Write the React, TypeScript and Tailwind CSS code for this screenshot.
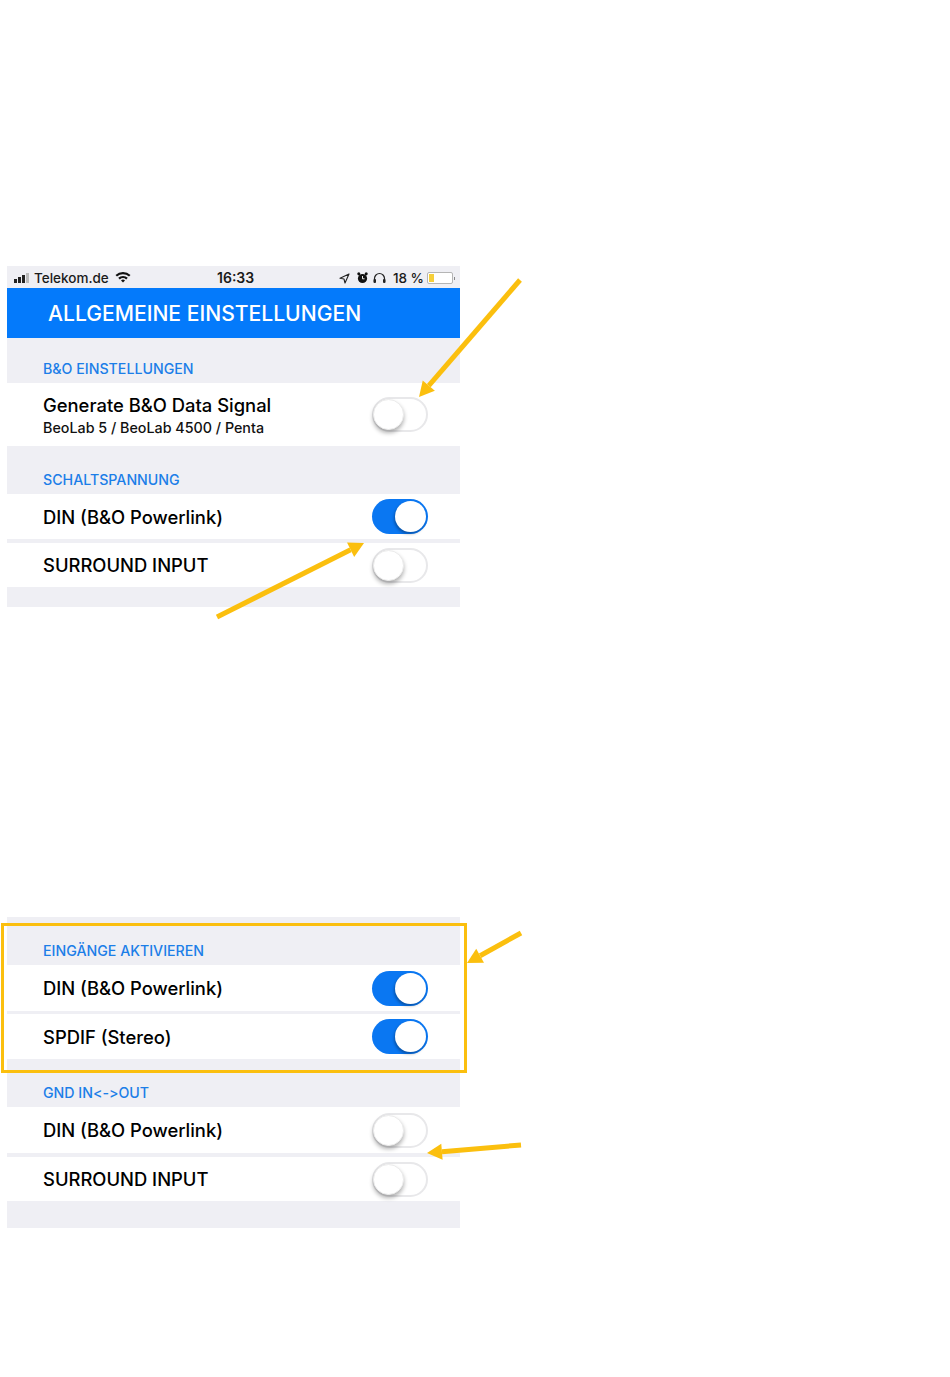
import React from "react";

const Toggle = ({ on }: { on: boolean }) => (
  <div
    className={`relative h-[35px] w-[56px] shrink-0 rounded-full ${
      on ? "bg-[#0a77f2]" : "border-2 border-[#e8e8ea] bg-white"
    }`}
  >
    <div
      className={`absolute h-[31px] w-[31px] rounded-full bg-white ${
        on
          ? "top-[2px] right-[2px] shadow-[-1px_2px_3px_rgba(0,0,0,0.3)]"
          : "top-[0px] left-[-1px] border border-[#ececec] shadow-[0_3px_4px_rgba(0,0,0,0.3)]"
      }`}
    />
  </div>
);

const SectionLabel = ({ children, height }: { children: React.ReactNode; height: string }) => (
  <div className={`flex items-end bg-[#efeff4] pb-[5px] pl-[36px] ${height}`}>
    <span className="text-[14.2px] leading-[18px] font-medium text-[#1c7ee8] [font-variant-ligatures:none] [font-feature-settings:'calt'_0]">
      {children}
    </span>
  </div>
);

const Row = ({ label, on, height }: { label: string; on: boolean; height: string }) => (
  <div className={`flex items-center justify-between bg-white pr-[32px] pl-[36px] ${height}`}>
    <span className="relative top-[1px] text-[18.4px] font-medium text-black">{label}</span>
    <Toggle on={on} />
  </div>
);

const StatusBar = () => (
  <div className="relative flex h-[22px] items-center justify-between bg-[#efeff4] pr-[5px] pl-[7px] pt-[2px] text-[13.5px] font-medium text-[#1a1a1a]">
    <div className="flex items-center">
      <div className="flex items-end gap-[1px]">
        <span className="h-[4px] w-[3px] bg-[#222]" />
        <span className="h-[6px] w-[3px] bg-[#222]" />
        <span className="h-[8px] w-[3px] bg-[#222]" />
        <span className="h-[10px] w-[3px] bg-[#bbb]" />
      </div>
      <span className="ml-[5px]">Telekom.de</span>
      <svg className="ml-[6px] -translate-y-[1px]" width="16" height="12" viewBox="0 0 16 12">
        <path d="M0.5 4 A11 11 0 0 1 15.5 4 L14 5.6 A9 9 0 0 0 2 5.6 Z" fill="#111" />
        <path d="M3.2 6.8 A7 7 0 0 1 12.8 6.8 L11.2 8.4 A5 5 0 0 0 4.8 8.4 Z" fill="#111" />
        <path d="M6 9.4 A3 3 0 0 1 10 9.4 L8 11.6 Z" fill="#111" />
      </svg>
    </div>
    <span className="absolute top-[1px] left-[210px] text-[14px] font-semibold">16:33</span>
    <div className="flex items-center">
      <svg width="11" height="11" viewBox="0 0 11 11">
        <path d="M10 1 L1 5.2 L5 6 L6 10 Z" fill="none" stroke="#222" strokeWidth="1.1" strokeLinejoin="round" />
      </svg>
      <svg className="ml-[7px]" width="11" height="12" viewBox="0 0 11 12">
        <circle cx="5.5" cy="6.5" r="4.6" fill="#111" />
        <circle cx="1.8" cy="1.8" r="1.5" fill="#111" />
        <circle cx="9.2" cy="1.8" r="1.5" fill="#111" />
        <path d="M5.5 4 V6.8 H7.5" stroke="#eee" strokeWidth="1" fill="none" />
      </svg>
      <svg className="ml-[5px]" width="13" height="12" viewBox="0 0 13 12">
        <path d="M1.5 10 V6.5 A5 5 0 0 1 11.5 6.5 V10" stroke="#222" strokeWidth="1.2" fill="none" />
        <rect x="0.5" y="7" width="2.5" height="4" rx="1" fill="#222" />
        <rect x="10" y="7" width="2.5" height="4" rx="1" fill="#222" />
      </svg>
      <span className="ml-[7px]">18 %</span>
      <div className="ml-[3px] flex h-[12px] w-[26px] items-center rounded-[2px] border border-[#b5b5b5] bg-white p-[1px]">
        <span className="h-full w-[5px] bg-[#f6cf3a]" />
      </div>
      <span className="ml-[1px] h-[3px] w-[1px] bg-[#888]" />
    </div>
  </div>
);

const Arrow = ({ x1, y1, x2, y2 }: { x1: number; y1: number; x2: number; y2: number }) => {
  // line stops short of the head so the tip stays sharp
  const len = Math.hypot(x2 - x1, y2 - y1);
  const ux = (x2 - x1) / len;
  const uy = (y2 - y1) / len;
  const bx = x2 - ux * 15;
  const by = y2 - uy * 15;
  const head = `${x2},${y2} ${bx - uy * 8},${by + ux * 8} ${bx + uy * 8},${by - ux * 8}`;
  return (
    <g>
      <line x1={x1} y1={y1} x2={bx} y2={by} stroke="#fbbf0e" strokeWidth="5" />
      <polygon points={head} fill="#fbbf0e" />
    </g>
  );
};

export default function App() {
  return (
    <div className="relative h-[1377px] w-[950px] overflow-hidden bg-white pt-[266px] pl-[7px] font-['Inter','Liberation_Sans',sans-serif]">
      <div className="w-[453px]">
        <StatusBar />
        <div className="flex h-[50px] items-center bg-[#047afb] pt-[2px] pl-[41px] text-[21.1px] font-medium text-white">
          ALLGEMEINE EINSTELLUNGEN
        </div>
        <SectionLabel height="h-[45px]">B&amp;O EINSTELLUNGEN</SectionLabel>
        <div className="flex h-[63px] items-center justify-between bg-white pr-[32px] pl-[36px]">
          <div className="flex flex-col">
            <span className="text-[18.4px] leading-[26px] font-medium text-black">Generate B&amp;O Data Signal</span>
            <span className="text-[14.3px] leading-[20px] font-medium text-[#111]">BeoLab 5 / BeoLab 4500 / Penta</span>
          </div>
          <Toggle on={false} />
        </div>
        <SectionLabel height="h-[48px]">SCHALTSPANNUNG</SectionLabel>
        <Row label="DIN (B&O Powerlink)" on height="h-[45px]" />
        <div className="h-[4px] bg-[#efeff4]" />
        <Row label="SURROUND INPUT" on={false} height="h-[44px]" />
        <div className="h-[20px] bg-[#efeff4]" />
      </div>

      <div className="mt-[310px] w-[453px]">
        <SectionLabel height="h-[48px]">EINGÄNGE AKTIVIEREN</SectionLabel>
        <Row label="DIN (B&O Powerlink)" on height="h-[46px]" />
        <div className="h-[3px] bg-[#efeff4]" />
        <Row label="SPDIF (Stereo)" on height="h-[45px]" />
        <SectionLabel height="h-[48px]">GND IN&lt;-&gt;OUT</SectionLabel>
        <Row label="DIN (B&O Powerlink)" on={false} height="h-[46px]" />
        <div className="h-[4px] bg-[#efeff4]" />
        <Row label="SURROUND INPUT" on={false} height="h-[44px]" />
        <div className="h-[27px] bg-[#efeff4]" />
      </div>

      {/* annotations on top of the screenshots */}
      <div className="absolute top-[923px] left-[1px] h-[150px] w-[466px] border-[3px] border-[#fbbf0e]" />
      <svg className="absolute top-0 left-0" width="950" height="1377">
        <Arrow x1={520} y1={280} x2={419} y2={397} />
        <Arrow x1={217} y1={617} x2={364} y2={543} />
        <Arrow x1={521} y1={933} x2={467} y2={963} />
        <Arrow x1={521} y1={1145} x2={427} y2={1153} />
      </svg>
    </div>
  );
}
